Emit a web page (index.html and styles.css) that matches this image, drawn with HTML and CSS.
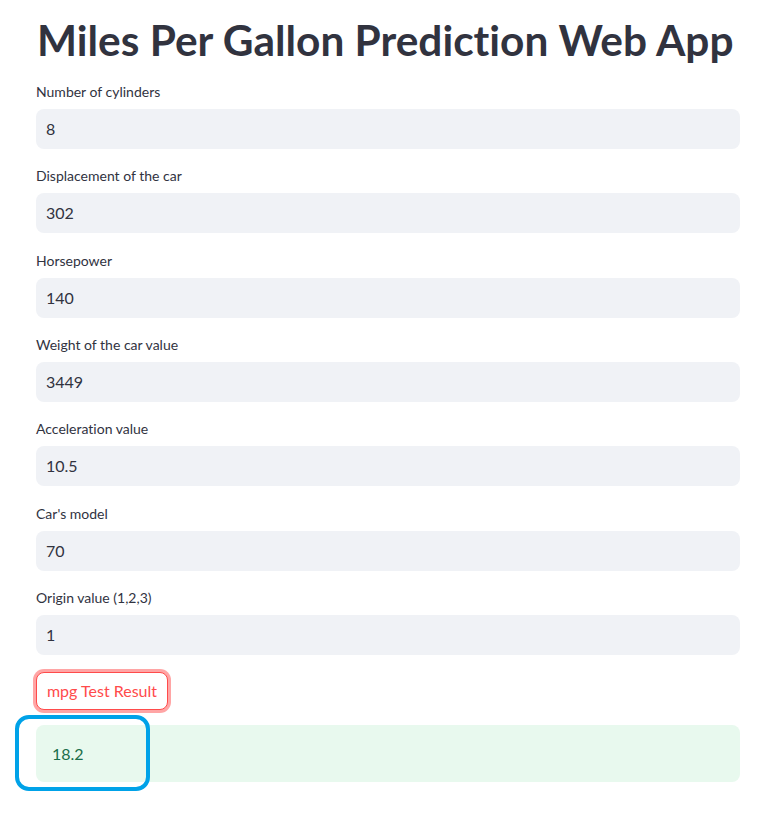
FILE: index.html
```html
<!DOCTYPE html>
<html>
<head>
<meta charset="utf-8">
<link rel="stylesheet" href="styles.css">
</head>
<body>
<main class="main">
  <h1 class="title">Miles Per Gallon Prediction Web App</h1>
  <div class="fields">
    <div class="field"><label class="label">Number of cylinders</label><div class="input">8</div></div>
    <div class="field"><label class="label">Displacement of the car</label><div class="input">302</div></div>
    <div class="field"><label class="label">Horsepower</label><div class="input">140</div></div>
    <div class="field"><label class="label">Weight of the car value</label><div class="input">3449</div></div>
    <div class="field"><label class="label">Acceleration value</label><div class="input">10.5</div></div>
    <div class="field"><label class="label">Car's model</label><div class="input">70</div></div>
    <div class="field"><label class="label">Origin value (1,2,3)</label><div class="input">1</div></div>
  </div>
  <button class="btn">mpg Test Result</button>
  <div class="result">
    <span class="result-text">18.2</span>
    <div class="annot"></div>
  </div>
</main>
</body>
</html>
```
FILE: styles.css
```css
html, body { margin: 0; padding: 0; background: #fff; }
body { font-family: "Lato", "Liberation Sans", sans-serif; color: #31333f; font-variant-ligatures: none; }
.main { width: 704px; padding: 0 37px 34px 36px; display: flex; flex-direction: column; }
.title { margin: 14px 0 0 1px; font-size: 42.4px; font-weight: 700; line-height: 52px; color: #31333f; letter-spacing: 0; white-space: nowrap; }
.fields { display: flex; flex-direction: column; gap: 15.33px; margin-top: 14px; }
.field { display: flex; flex-direction: column; }
.label { font-size: 14px; line-height: 24px; height: 24px; margin-bottom: 5px; }
.input { height: 40px; background: #f0f2f6; border-radius: 8px; padding-left: 10px; font-size: 16px; line-height: 40px; box-sizing: border-box; }
.btn { align-self: flex-start; margin-top: 17px; height: 38px; width: 132px; background: #fff; border: 1px solid #ff4b4b; border-radius: 8px; color: #ff4b4b; font-family: inherit; font-size: 16px; padding: 0; box-shadow: 0 0 0 3px rgba(255, 75, 75, 0.5); }
.result { position: relative; margin-top: 15px; height: 57px; background: #e8f9ee; border-radius: 8px; padding: 0 16px; display: flex; align-items: center; font-size: 16px; color: #1a6e4a; }
.annot { position: absolute; left: -21px; top: -10px; width: 127px; height: 68px; border: 4px solid #00a2e8; border-radius: 14px; }
```
